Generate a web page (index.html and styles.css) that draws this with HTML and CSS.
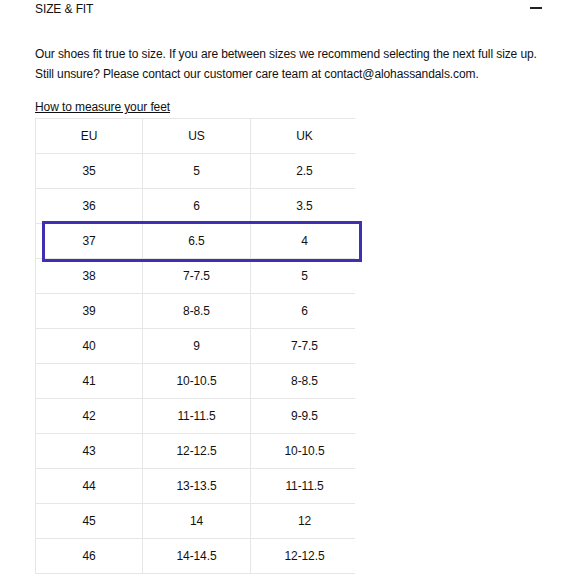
FILE: index.html
```html
<!DOCTYPE html>
<html>
<head>
<meta charset="utf-8">
<link rel="stylesheet" href="styles.css">
</head>
<body>
<div class="section">
  <div class="head">
    <span class="title">SIZE &amp; FIT</span>
    <span class="minus"></span>
  </div>
  <div class="content">
    <p class="intro">Our shoes fit true to size. If you are between sizes we recommend selecting the next full size up.<br>Still unsure? Please contact our customer care team at contact@alohassandals.com.</p>
    <a class="measure">How to measure your feet</a>
    <div class="table-wrap">
      <div class="table-clip">
        <table class="sizes">
          <tr><td>EU</td><td>US</td><td>UK</td></tr>
          <tr><td>35</td><td>5</td><td>2.5</td></tr>
          <tr><td>36</td><td>6</td><td>3.5</td></tr>
          <tr><td>37</td><td>6.5</td><td>4</td></tr>
          <tr><td>38</td><td>7-7.5</td><td>5</td></tr>
          <tr><td>39</td><td>8-8.5</td><td>6</td></tr>
          <tr><td>40</td><td>9</td><td>7-7.5</td></tr>
          <tr><td>41</td><td>10-10.5</td><td>8-8.5</td></tr>
          <tr><td>42</td><td>11-11.5</td><td>9-9.5</td></tr>
          <tr><td>43</td><td>12-12.5</td><td>10-10.5</td></tr>
          <tr><td>44</td><td>13-13.5</td><td>11-11.5</td></tr>
          <tr><td>45</td><td>14</td><td>12</td></tr>
          <tr><td>46</td><td>14-14.5</td><td>12-12.5</td></tr>
        </table>
      </div>
      <div class="highlight"></div>
    </div>
  </div>
</div>
</body>
</html>
```

FILE: styles.css
```css
html, body {
  margin: 0;
  padding: 0;
  background: #ffffff;
}
body {
  font-family: "Liberation Sans", Arial, sans-serif;
  font-size: 12px;
  letter-spacing: -0.1px;
  color: #111111;
}
.section {
  padding: 0 38px 0 35px;
}
.head {
  display: flex;
  justify-content: space-between;
  align-items: flex-start;
  height: 18px;
  line-height: 18px;
}
.title {
  font-size: 12px;
}
.minus {
  display: block;
  width: 12px;
  height: 1.5px;
  background: #222;
  margin-top: 7px;
}
.content {
  padding-top: 26px;
}
.intro {
  margin: 0;
  line-height: 20px;
  white-space: nowrap;
}
.measure {
  display: block;
  margin-top: 13px;
  line-height: 20px;
  text-decoration: underline;
  color: #111111;
}
.table-wrap {
  position: relative;
  margin-top: 1px;
  width: 320px;
}
.table-clip {
  width: 320px;
  overflow: hidden;
}
.sizes {
  border-collapse: collapse;
  width: 320px;
  table-layout: fixed;
}
.sizes td {
  height: 34px;
  padding: 0;
  text-align: center;
  border-top: 1px solid #e6e6e6;
  border-left: 1px solid #e6e6e6;
  border-bottom: 1px solid #e6e6e6;
}
.sizes td:nth-child(1) { width: 106px; }
.sizes td:nth-child(2) { width: 107px; }
.sizes td:nth-child(3) { width: 107px; }
.highlight {
  position: absolute;
  left: 7px;
  top: 103px;
  width: 314px;
  height: 35px;
  border: 3px solid #3f30b3;
}
```
